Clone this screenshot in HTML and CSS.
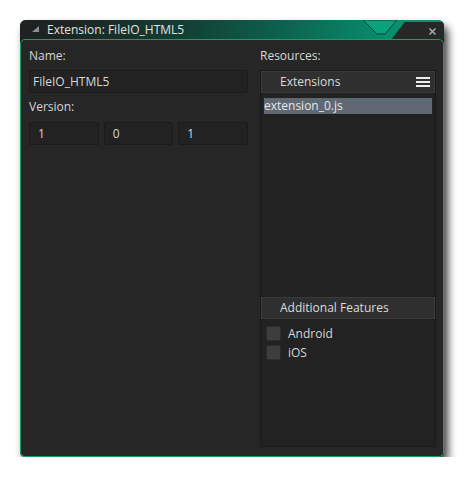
FILE: index.html
```html
<!DOCTYPE html>
<html>
<head>
<meta charset="utf-8">
<link rel="stylesheet" href="styles.css">
</head>
<body>
<div class="window">
  <div class="titlebar">
    <svg class="deco" width="424" height="19" viewBox="0 0 424 19">
      <polygon points="343,0 377,0 365,14 357,14" fill="#07a37d" stroke="#0a4437" stroke-width="1"/>
      <polygon points="372,19 385,2 424,2 424,19" fill="#262828"/>
      <line x1="372" y1="19" x2="385" y2="2" stroke="#0b4a3b" stroke-width="1"/>
      <line x1="409.5" y1="8.5" x2="415.5" y2="14.5" stroke="#a9adad" stroke-width="1.5"/>
      <line x1="415.5" y1="8.5" x2="409.5" y2="14.5" stroke="#a9adad" stroke-width="1.5"/>
    </svg>
    <svg class="tri" width="7" height="7" viewBox="0 0 7 7"><polygon points="7,0 7,6 0,6" fill="#8c9090"/></svg>
    <span class="title">Extension: FileIO_HTML5</span>
  </div>
  <div class="content">
    <div class="left">
      <div class="label">Name:</div>
      <div class="field name">FileIO_HTML5</div>
      <div class="label version-label">Version:</div>
      <div class="version">
        <div class="field num">1</div>
        <div class="field num">0</div>
        <div class="field num">1</div>
      </div>
    </div>
    <div class="right">
      <div class="label">Resources:</div>
      <div class="panel">
        <div class="phead">
          <span>Extensions</span>
          <svg class="menu" width="14" height="10" viewBox="0 0 14 10">
            <rect x="0" y="0" width="14" height="2" fill="#ececec"/>
            <rect x="0" y="4" width="14" height="2" fill="#ececec"/>
            <rect x="0" y="8" width="14" height="2" fill="#ececec"/>
          </svg>
        </div>
        <div class="list">
          <div class="item">extension_0.js</div>
        </div>
        <div class="phead">
          <span>Additional Features</span>
        </div>
        <div class="features">
          <div class="check"><span class="box"></span><span>Android</span></div>
          <div class="check"><span class="box"></span><span>iOS</span></div>
        </div>
      </div>
    </div>
  </div>
</div>
</body>
</html>
```

FILE: styles.css
```css
body {
  margin: 0;
  background: #ffffff;
  font-family: "Open Sans", "Noto Sans", sans-serif;
  font-size: 12px;
  color: #d6d6d6;
}

.window {
  margin: 20px 0 0 20px;
  width: 424px;
  height: 437px;
  display: flex;
  flex-direction: column;
  border-radius: 6px 6px 5px 5px;
  background: #1e2222;
  box-shadow: 4px 6px 9px rgba(0, 0, 0, 0.75);
}

.titlebar {
  position: relative;
  height: 19px;
  flex: none;
  display: flex;
  align-items: center;
  padding-left: 12px;
  gap: 8px;
  border-radius: 6px 6px 0 0;
  overflow: hidden;
  line-height: 19px;
  background: linear-gradient(to right, #1e2222 0%, #1d2523 12%, #133e35 38%, #0d5f4c 60%, #0a7f63 78%, #08926f 90%, #08926f 100%);
}

.deco {
  position: absolute;
  left: 0;
  top: 0;
}

.tri {
  position: relative;
}

.title {
  position: relative;
  color: #e2e2e2;
}

.content {
  flex: 1;
  display: flex;
  gap: 12px;
  padding: 7px 7px 8px 8px;
  border: 1px solid #17a05f;
  border-radius: 5px;
  background: #262626;
  min-height: 0;
}

.left {
  width: 219px;
  flex: none;
}

.right {
  width: 176px;
  flex: none;
  display: flex;
  flex-direction: column;
}

.label {
  height: 17px;
  line-height: 17px;
  margin-bottom: 6px;
}

.version-label {
  margin-top: 5px;
  margin-bottom: 7px;
}

.field {
  box-sizing: border-box;
  height: 23px;
  line-height: 21px;
  border: 1px solid #1b1b1b;
  border-radius: 2px;
  background: #222222;
  color: #d8d8d8;
}

.name {
  padding-left: 3px;
}

.version {
  display: grid;
  grid-template-columns: 1fr 1fr 1fr;
  gap: 5px;
}

.num {
  padding-left: 8px;
}

.panel {
  box-sizing: border-box;
  height: 377px;
  display: flex;
  flex-direction: column;
  border: 1px solid #1a1a1a;
  background: #222222;
}

.phead {
  box-sizing: border-box;
  height: 22px;
  flex: none;
  display: flex;
  align-items: center;
  justify-content: space-between;
  padding: 0 4px 0 18px;
  line-height: 20px;
  border: 1px solid #3a3a3a;
  background: #2f2f2f;
  color: #dcdcdc;
}

.list {
  flex: 1;
  padding: 5px 3px 0 3px;
}

.item {
  height: 16px;
  line-height: 16px;
  background: #5f6873;
  color: #e6e6e6;
}

.features {
  height: 127px;
  flex: none;
  box-sizing: border-box;
  padding: 5px 0 0 5px;
}

.check {
  height: 19px;
  display: flex;
  align-items: center;
  gap: 7px;
}

.box {
  box-sizing: border-box;
  width: 15px;
  height: 15px;
  border: 1px solid #2b2b2b;
  border-radius: 2px;
  background: #3d3d3d;
}
```
